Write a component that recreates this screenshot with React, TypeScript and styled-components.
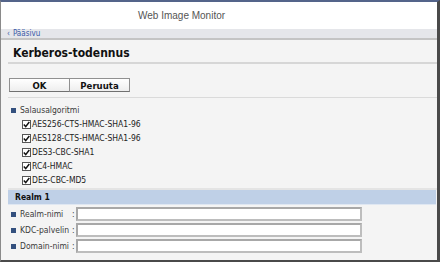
import React from "react";
import styled, { createGlobalStyle } from "styled-components";

const Global = createGlobalStyle`
    html, body { margin: 0; padding: 0; background: #ffffff; }
    body {
        font-family: "DejaVu Sans Condensed", "DejaVu Sans", Verdana, sans-serif;
        font-stretch: condensed;
    }
`;

const Frame = styled.div`
    width: 440px;
    height: 262px;
    box-sizing: border-box;
    border-top: 2px solid #54648a;
    border-left: 1px solid #8a8a8a;
    border-right: 3px solid #4a4a4a;
    border-bottom: 2px solid #4a4a4a;
    display: flex;
    flex-direction: column;
    overflow: hidden;
    background: #f4f4f4;
`;

const Header = styled.div`
    height: 27px;
    flex: none;
    background: #ffffff;
    display: flex;
    align-items: center;
    padding-left: 137px;
    font-family: "Liberation Sans", Arial, sans-serif;
    font-stretch: normal;
    font-size: 10px;
    color: #555555;
`;

const Crumbs = styled.div`
    height: 9px;
    flex: none;
    background: #e5e6ea;
    border-bottom: 2px solid #c4c4c4;
    display: flex;
    align-items: center;
    padding-left: 6px;
    font-size: 8px;
    color: #3a5aa8;
    gap: 3px;
`;

const Content = styled.div`
    flex: 1;
    display: flex;
    flex-direction: column;
    padding: 0 0 0 7px;
`;

const Title = styled.h1`
    margin: 0;
    height: 18px;
    display: flex;
    align-items: center;
    padding: 4px 0 0 5px;
    font-size: 12px;
    font-weight: bold;
    color: #111111;
    border-bottom: 2px solid #d6d6d6;
`;

const Buttons = styled.div`
    display: flex;
    margin-top: 14px;
    padding: 0 0 5px 1px;
    border-bottom: 1px solid #dadada;
`;

const Button = styled.button`
    width: 61px;
    height: 14px;
    padding: 0;
    box-sizing: border-box;
    border: 1px solid #909090;
    border-bottom-color: #707070;
    background: linear-gradient(#ffffff, #eeeeee);
    font-family: "DejaVu Sans Condensed", "DejaVu Sans", Verdana, sans-serif;
    font-stretch: condensed;
    font-size: 9.5px;
    font-weight: bold;
    color: #111111;
    & + & { margin-left: -1px; }
`;

const Section = styled.div`
    display: flex;
    flex-direction: column;
    padding: 5px 0 1px 3px;
    border-bottom: 2px solid #e4e4e4;
`;

const Label = styled.div`
    display: flex;
    align-items: center;
    height: 14px;
    font-size: 8.5px;
    color: #3a3a3a;
`;

const Bullet = styled.span`
    width: 5px;
    height: 5px;
    background: #34507e;
    margin-right: 4px;
    flex: none;
`;

const CheckRow = styled.label`
    display: flex;
    align-items: center;
    height: 14px;
    padding-left: 11px;
    font-size: 8.5px;
    color: #222222;
`;

const Box = styled.span`
    width: 9px;
    height: 9px;
    box-sizing: border-box;
    border: 1px solid #555555;
    background: #ffffff;
    margin-right: 1px;
    display: flex;
    align-items: center;
    justify-content: center;
    flex: none;
`;

const RealmBar = styled.div`
    height: 14px;
    flex: none;
    margin-right: 1px;
    background: #bfd0e7;
    border-bottom: 1px solid #dfe7f2;
    display: flex;
    align-items: center;
    padding-left: 7px;
    font-size: 8.5px;
    font-weight: bold;
    color: #111111;
`;

const Fields = styled.div`
    display: flex;
    flex-direction: column;
    padding: 2px 0 0 3px;
    gap: 2px;
`;

const FieldRow = styled.div`
    display: flex;
    align-items: center;
    height: 14px;
    font-size: 8.5px;
    color: #3a3a3a;
    white-space: nowrap;
`;

const FieldName = styled.span`
    width: 52px;
    flex: none;
`;

const Colon = styled.span`
    width: 4px;
    flex: none;
`;

const Input = styled.input`
    width: 286px;
    height: 14px;
    flex: none;
    box-sizing: border-box;
    border: 2px solid #bdbdbd;
    border-top-color: #a8a8a8;
    border-left-color: #a8a8a8;
    background: #ffffff;
    padding: 0;
    margin: 0;
`;

const Check = () => (
    <Box>
        <svg width="7" height="7" viewBox="0 0 7 7">
            <path d="M0.8 3.6 L2.7 5.6 L6.3 1" stroke="#111" strokeWidth="1.5" fill="none"/>
        </svg>
    </Box>
);

const algorithms = [
    "AES256-CTS-HMAC-SHA1-96",
    "AES128-CTS-HMAC-SHA1-96",
    "DES3-CBC-SHA1",
    "RC4-HMAC",
    "DES-CBC-MD5",
];

const fields = ["Realm-nimi", "KDC-palvelin", "Domain-nimi"];

const App: React.FC = () => {
    return <Frame>
        <Global/>
        <Header>Web Image Monitor</Header>
        <Crumbs><span>‹</span><span>Pääsivu</span></Crumbs>
        <Content>
            <Title>Kerberos-todennus</Title>
            <Buttons>
                <Button>OK</Button>
                <Button>Peruuta</Button>
            </Buttons>
            <Section>
                <Label><Bullet/>Salausalgoritmi</Label>
                { algorithms.map(a => <CheckRow key={ a }><Check/>{ a }</CheckRow>) }
            </Section>
            <RealmBar>Realm 1</RealmBar>
            <Fields>
                { fields.map(f => <FieldRow key={ f }>
                    <Bullet/>
                    <FieldName>{ f }</FieldName>
                    <Colon>:</Colon>
                    <Input/>
                </FieldRow>) }
            </Fields>
        </Content>
    </Frame>
}

export default App;
